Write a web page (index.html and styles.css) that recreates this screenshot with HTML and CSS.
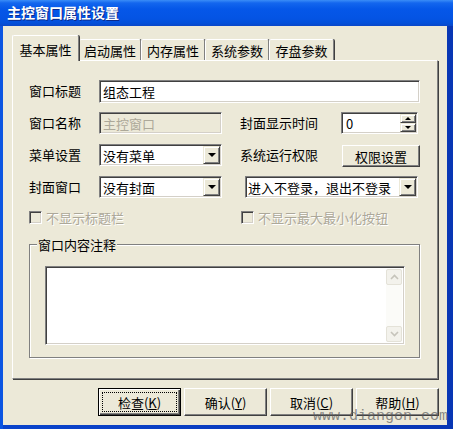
FILE: index.html
```html
<!DOCTYPE html>
<html lang="zh">
<head>
<meta charset="utf-8">
<title>主控窗口属性设置</title>
<link rel="stylesheet" href="styles.css">
</head>
<body>
<div class="window">
  <div class="titlebar">主控窗口属性设置</div>
  <div class="client">
    <div class="tabs">
      <div class="tab active">基本属性</div>
      <div class="tab w62">启动属性</div>
      <div class="tab w64">内存属性</div>
      <div class="tab w64">系统参数</div>
      <div class="tab w65">存盘参数</div>
    </div>
    <div class="panel">
      <div class="form">
        <div class="lbl">窗口标题</div>
        <div class="field span-all tall">组态工程</div>

        <div class="lbl">窗口名称</div>
        <div class="field disabled">主控窗口</div>
        <div class="lbl c4">封面显示时间</div>
        <div class="field spin"><span>0</span><div class="spin-btns"><span class="sbtn"><i class="tri-up"></i></span><span class="sbtn"><i class="tri-down"></i></span></div></div>

        <div class="lbl">菜单设置</div>
        <div class="field combo"><span>没有菜单</span><span class="arrow"><i class="tri-down big"></i></span></div>
        <div class="lbl c4">系统运行权限</div>
        <div class="btn perm">权限设置</div>

        <div class="lbl">封面窗口</div>
        <div class="field combo"><span>没有封面</span><span class="arrow"><i class="tri-down big"></i></span></div>
        <div class="field combo wide"><span>进入不登录，退出不登录</span><span class="arrow"><i class="tri-down big"></i></span></div>
      </div>

      <div class="checks">
        <div class="check first"><span class="box"></span><span class="ctext">不显示标题栏</span></div>
        <div class="check"><span class="box"></span><span class="ctext">不显示最大最小化按钮</span></div>
      </div>

      <div class="group">
        <div class="glabel">窗口内容注释</div>
        <div class="memo">
          <div class="memo-text"></div>
          <div class="vscroll">
            <span class="sarrow"><svg width="9" height="6" viewBox="0 0 9 6"><path d="M1 5 L4.5 1.5 L8 5" fill="none" stroke="#c6c4bb" stroke-width="1.6"/></svg></span>
            <span class="strack"></span>
            <span class="sarrow"><svg width="9" height="6" viewBox="0 0 9 6"><path d="M1 1 L4.5 4.5 L8 1" fill="none" stroke="#c6c4bb" stroke-width="1.6"/></svg></span>
          </div>
        </div>
      </div>
    </div>
    <div class="buttons">
      <div class="btn dlg default">检查(<u>K</u>)</div>
      <div class="btn dlg">确认(<u>Y</u>)</div>
      <div class="btn dlg">取消(<u>C</u>)</div>
      <div class="btn dlg">帮助(<u>H</u>)</div>
    </div>
  </div>
  <div class="watermark">www.diangon.com</div>
</div>
</body>
</html>
```

FILE: styles.css
```css
* { box-sizing: border-box; }
html, body { margin: 0; padding: 0; }
body {
  width: 453px;
  height: 429px;
  overflow: hidden;
  font-family: "Noto Sans CJK SC", "Noto Sans", sans-serif;
  font-size: 13px;
  color: #000;
  background: #0a3fc4;
}
.window {
  position: relative;
  width: 453px;
  height: 429px;
  display: flex;
  flex-direction: column;
  background: linear-gradient(to right, #0b55e2 0, #0b55e2 3px, #0a44cc 3px, #0836b4 100%);
}
.titlebar {
  flex: none;
  height: 26px;
  padding-left: 7px;
  line-height: 25px;
  color: #fff;
  font-weight: bold;
  font-size: 14px;
  text-shadow: 1px 1px 0 #0b2a8a;
  background: linear-gradient(to bottom, #3a8df7 0, #1366ee 3px, #0557e8 9px, #0454e4 18px, #0350da 23px, #0a47c8 26px);
}
.client {
  flex: 1;
  margin: 0 6px 4px 3px;
  background: #ece9d8;
  display: flex;
  flex-direction: column;
}

/* tabs */
.tabs {
  display: flex;
  align-items: flex-end;
  height: 34px;
  padding-left: 9px;
  flex: none;
}
.tab {
  height: 21px;
  padding-top: 2px;
  line-height: 18px;
  text-align: center;
  border-top: 1px solid #fff;
  border-left: 1px solid #fff;
  border-right: 1px solid #808080;
  box-shadow: 1px 0 0 #404040;
  border-radius: 2px 2px 0 0;
  background: #ece9d8;
  white-space: nowrap;
}
.tab.active {
  position: relative;
  z-index: 2;
  width: 67px;
  height: 26px;
  padding-top: 5px;
  margin-bottom: -1px;
}
.w62 { width: 62px; }
.w64 { width: 64px; }
.w65 { width: 65px; }

/* panel */
.panel {
  flex: none;
  margin-left: 9px;
  width: 426px;
  height: 319px;
  padding: 19px 0 0 16px;
  border-top: 1px solid #fff;
  border-left: 1px solid #fff;
  border-right: 1px solid #808080;
  border-bottom: 1px solid #808080;
  box-shadow: 1px 1px 0 #404040;
  position: relative;
  z-index: 1;
}
.form {
  display: grid;
  grid-template-columns: 70px 123px 18px 101px 79px;
  grid-auto-rows: 22px;
  row-gap: 10px;
  align-items: center;
}
.lbl { white-space: nowrap; line-height: 22px; }
.c4 { grid-column: 4; }
.field {
  height: 22px;
  display: flex;
  align-items: center;
  padding-left: 3px;
  background: #fff;
  border: 1px solid;
  border-color: #808080 #fff #fff #808080;
  box-shadow: inset 1px 1px 0 #404040, inset -1px -1px 0 #d4d0c8;
  white-space: nowrap;
  overflow: hidden;
}
.field.tall { height: 23px; }
.span-all { grid-column: 2 / 6; }
.field.disabled { background: #ece9d8; color: #aca899; }
.combo .arrow, .sbtn {
  margin-left: auto;
  display: flex;
  align-items: center;
  justify-content: center;
  background: #ece9d8;
  border: 1px solid;
  border-color: #ece9d8 #404040 #404040 #ece9d8;
  box-shadow: inset 1px 1px 0 #fff, inset -1px -1px 0 #808080;
}
.combo .arrow {
  width: 17px;
  height: 18px;
  margin-right: 1px;
}
.combo.wide {
  grid-column: 4 / 6;
  margin-left: 5px;
  margin-right: 2px;
  padding-left: 2px;
}
.tri-down, .tri-up {
  display: block;
  width: 0; height: 0;
  border-left: 3px solid transparent;
  border-right: 3px solid transparent;
}
.tri-down { border-top: 3px solid #000; }
.tri-up { border-bottom: 3px solid #000; }
.tri-down.big {
  border-left-width: 4px;
  border-right-width: 4px;
  border-top-width: 4px;
}
.spin { margin-right: 2px; padding-left: 4px; }
.spin-btns {
  margin-left: auto;
  margin-right: 1px;
  display: flex;
  flex-direction: column;
}
.sbtn {
  width: 16px;
  height: 9px;
}

.btn {
  display: flex;
  align-items: center;
  justify-content: center;
  background: #ece9d8;
  border: 1px solid;
  border-color: #fff #404040 #404040 #fff;
  box-shadow: inset -1px -1px 0 #808080;
  white-space: nowrap;
}
.perm {
  height: 22px;
  margin-left: 1px;
  align-self: end;
  margin-bottom: -1px;
  font-size: 13px;
}

/* checkboxes */
.checks {
  display: flex;
  margin-top: 13px;
  height: 13px;
  align-items: center;
}
.check {
  display: flex;
  align-items: center;
  color: #aca899;
  text-shadow: 1px 1px 0 #fff;
}
.check.first { width: 212px; }
.box {
  width: 13px;
  height: 13px;
  border: 1px solid;
  border-color: #808080 #fff #fff #808080;
  box-shadow: inset 1px 1px 0 #404040, inset -1px -1px 0 #d4d0c8;
  background: #ece9d8;
}
.ctext { margin-left: 4px; line-height: 13px; }

/* group */
.group {
  margin-top: 20px;
  width: 391px;
  height: 114px;
  border: 1px solid #808080;
  box-shadow: inset 1px 1px 0 #fff, 1px 1px 0 #fff;
  display: flex;
  flex-direction: column;
}
.glabel {
  align-self: flex-start;
  margin: -8px 0 0 7px;
  padding: 0 1px;
  line-height: 16px;
  background: #ece9d8;
  position: relative;
}
.memo {
  margin: 13px 0 0 15px;
  width: 360px;
  height: 79px;
  display: flex;
  background: #fff;
  border: 1px solid;
  border-color: #808080 #fff #fff #808080;
  box-shadow: inset 1px 1px 0 #404040, inset -1px -1px 0 #d4d0c8;
  padding: 2px 2px 2px 2px;
}
.memo-text { flex: 1; }
.vscroll {
  width: 16px;
  display: flex;
  flex-direction: column;
  background: #fbfbf8;
}
.sarrow {
  height: 16px;
  display: flex;
  align-items: center;
  justify-content: center;
  background: #f3f2ec;
  border: 1px solid #e4e2d8;
  border-radius: 2px;
}
.strack { flex: 1; }

/* bottom buttons */
.buttons {
  display: flex;
  gap: 3px;
  margin-top: 9px;
  padding-left: 95px;
}
.btn.dlg {
  width: 83px;
  height: 28px;
  position: relative;
}
.btn.default {
  border: 1px solid #000;
  box-shadow: inset 1px 1px 0 #fff, inset -1px -1px 0 #404040, inset -2px -2px 0 #808080;
}
.btn.default::after {
  content: "";
  position: absolute;
  inset: 3px;
  border: 1px dotted #000;
}
.btn u { text-decoration: underline; }

.watermark {
  position: absolute;
  right: 5px;
  bottom: 4px;
  font-family: "Liberation Mono", monospace;
  font-size: 15px;
  line-height: 16px;
  color: rgba(90, 90, 90, 0.7);
}
```
